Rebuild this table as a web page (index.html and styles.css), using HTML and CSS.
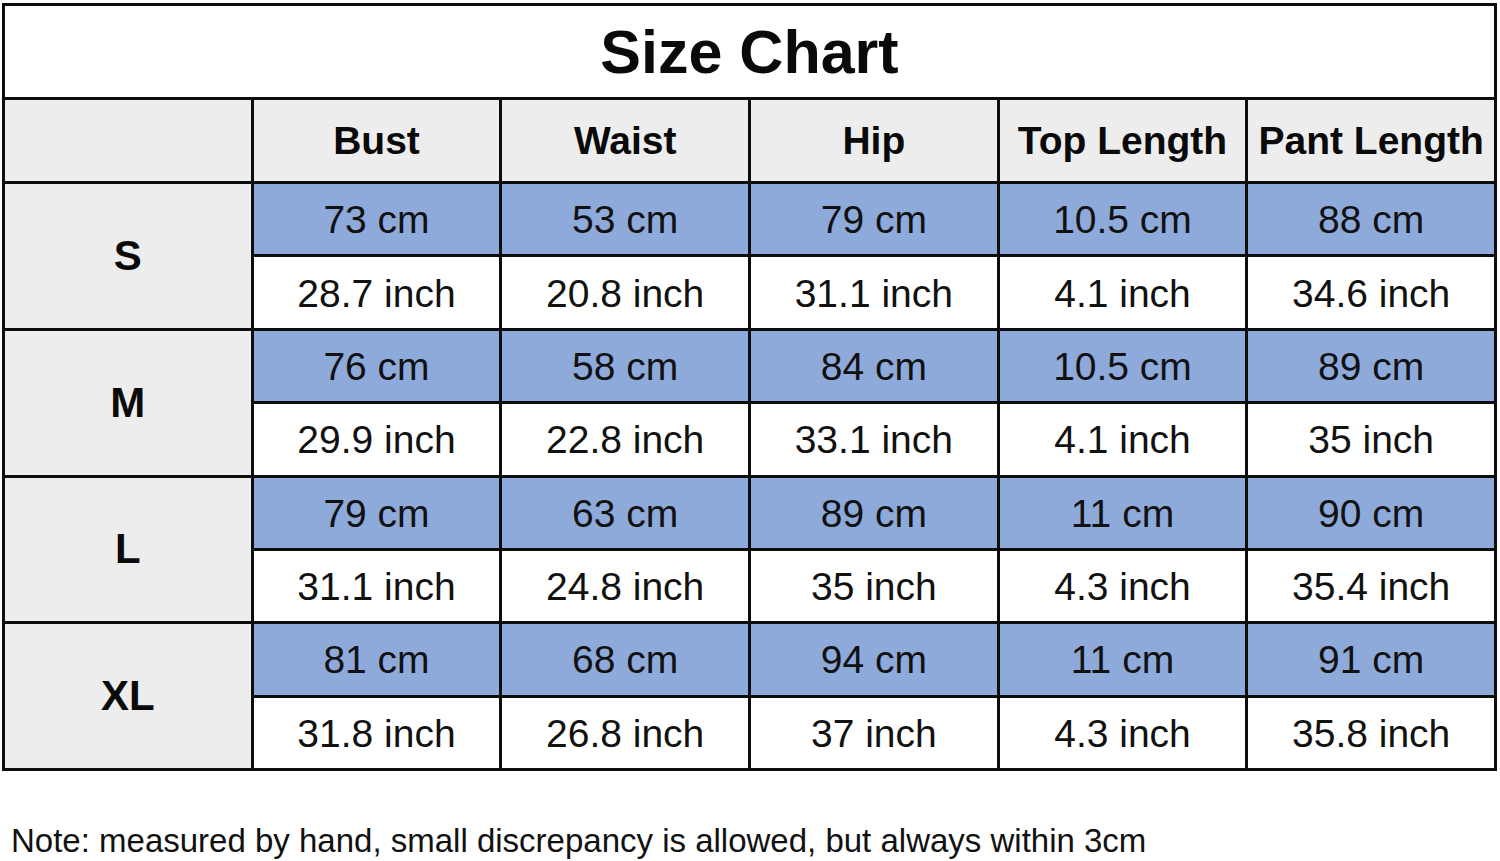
FILE: index.html
```html
<!DOCTYPE html>
<html lang="en">
<head>
<meta charset="utf-8">
<title>Size Chart</title>
<link rel="stylesheet" href="styles.css">
</head>
<body>
<div class="page">
  <div class="chart">
    <div class="title">Size Chart</div>

    <div class="head"></div>
    <div class="head">Bust</div>
    <div class="head">Waist</div>
    <div class="head">Hip</div>
    <div class="head">Top Length</div>
    <div class="head">Pant Length</div>

    <div class="size">S</div>
    <div class="cm">73 cm</div><div class="cm">53 cm</div><div class="cm">79 cm</div><div class="cm">10.5 cm</div><div class="cm">88 cm</div>
    <div class="in">28.7 inch</div><div class="in">20.8 inch</div><div class="in">31.1 inch</div><div class="in">4.1 inch</div><div class="in">34.6 inch</div>

    <div class="size">M</div>
    <div class="cm">76 cm</div><div class="cm">58 cm</div><div class="cm">84 cm</div><div class="cm">10.5 cm</div><div class="cm">89 cm</div>
    <div class="in">29.9 inch</div><div class="in">22.8 inch</div><div class="in">33.1 inch</div><div class="in">4.1 inch</div><div class="in">35 inch</div>

    <div class="size">L</div>
    <div class="cm">79 cm</div><div class="cm">63 cm</div><div class="cm">89 cm</div><div class="cm">11 cm</div><div class="cm">90 cm</div>
    <div class="in">31.1 inch</div><div class="in">24.8 inch</div><div class="in">35 inch</div><div class="in">4.3 inch</div><div class="in">35.4 inch</div>

    <div class="size">XL</div>
    <div class="cm">81 cm</div><div class="cm">68 cm</div><div class="cm">94 cm</div><div class="cm">11 cm</div><div class="cm">91 cm</div>
    <div class="in">31.8 inch</div><div class="in">26.8 inch</div><div class="in">37 inch</div><div class="in">4.3 inch</div><div class="in">35.8 inch</div>
  </div>
  <p class="note">Note: measured by hand, small discrepancy is allowed, but always within 3cm</p>
</div>
</body>
</html>
```
FILE: styles.css
```css
html, body {
  margin: 0;
  padding: 0;
  background: #ffffff;
}

body {
  font-family: "Liberation Sans", Arial, sans-serif;
  color: #111111;
}

.page {
  padding: 3px 0 0 2px;
}

.chart {
  box-sizing: border-box;
  width: 1495px;
  height: 768px;
  padding: 3px;
  background: #0d0d0d;
  display: grid;
  grid-template-columns: repeat(6, 1fr);
  grid-template-rows: 91px 81px repeat(8, 1fr);
  gap: 3px;
}

.chart > div {
  display: flex;
  align-items: center;
  justify-content: center;
  white-space: nowrap;
}

.title {
  grid-column: 1 / -1;
  background: #ffffff;
  font-weight: bold;
  font-size: 61px;
  color: #0a0a0a;
}

.head {
  background: #ededed;
  font-weight: bold;
  font-size: 39px;
  color: #0a0a0a;
}

.size {
  grid-row: span 2;
  background: #ededed;
  font-weight: bold;
  font-size: 42px;
  color: #0a0a0a;
}

.cm {
  background: #8eaadb;
  font-size: 39px;
  padding-top: 2px;
}

.in {
  background: #ffffff;
  font-size: 39px;
  padding-top: 2px;
}

.note {
  margin: 51px 0 0 9px;
  font-size: 33px;
  line-height: 38px;
  color: #111111;
}
```
